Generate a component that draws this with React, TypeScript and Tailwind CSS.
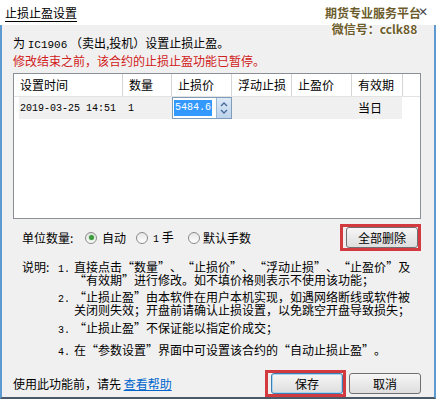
import React from "react";

const cjk = { fontFamily: '"Noto Sans CJK SC", "Noto Sans", sans-serif' };
const mono = { fontFamily: '"Liberation Mono", "Noto Sans CJK SC", monospace' };

function Q({ s }: { s: string }) {
  const parts = s.split(/([“”])/);
  return (
    <>
      {parts.map((p, i) =>
        p === "“" ? (
          <span key={i} className="inline-block w-[12px] text-right">“</span>
        ) : p === "”" ? (
          <span key={i} className="inline-block w-[12px] text-left">”</span>
        ) : (
          <React.Fragment key={i}>{p}</React.Fragment>
        )
      )}
    </>
  );
}

function Radio({ checked }: { checked?: boolean }) {
  return (
    <span className="w-[12px] h-[12px] rounded-full border border-[#8a8a8a] bg-gradient-to-b from-[#e6e6e6] to-[#ffffff] flex items-center justify-center shrink-0">
      {checked && <span className="w-[5px] h-[5px] rounded-full bg-[#3e9a3e] shadow-[0_0_2px_#7fcf7f]" />}
    </span>
  );
}

function WinButton({ children, def }: { children: React.ReactNode; def?: boolean }) {
  return (
    <div
      className={
        "w-[72px] h-[21px] rounded-[3px] border flex items-center justify-center text-[12px] text-black bg-gradient-to-b from-[#f6f6f6] to-[#dedede] " +
        (def ? "border-[#3c7fb1] shadow-[inset_0_0_0_1px_#a9d4f2]" : "border-[#707070]")
      }
    >
      {children}
    </div>
  );
}

export default function App() {
  const cols = [
    { t: "设置时间", w: 109 },
    { t: "数量", w: 49 },
    { t: "止损价", w: 60 },
    { t: "浮动止损", w: 60 },
    { t: "止盈价", w: 60 },
    { t: "有效期", w: 51 },
  ];
  return (
    <div className="w-[436px] h-[402px] bg-white relative overflow-hidden" style={cjk}>
      {/* title bar */}
      <div className="h-[25px] bg-white flex items-center pl-[5px] relative">
        <span className="text-[12px] text-black underline underline-offset-[3px] leading-none">止损止盈设置</span>
        <span className="absolute right-[8px] top-[5px] text-[12px] text-[#444] leading-none">✕</span>
      </div>
      {/* watermark */}
      <div
        className="absolute top-[5px] right-[15px] flex flex-col items-center text-[12px] font-bold text-[#6c5c2c] leading-[16px] z-10"
        style={{ textShadow: "0 0 2px #fff, 0 0 2px #fff, 0 0 3px #fff" }}
      >
        <span>期货专业服务平台</span>
        <span className="pl-[3px]">微信号：cclk88</span>
      </div>

      {/* body */}
      <div className="h-[374px] bg-[#f0f0f0] border-l-2 border-r-2 border-b-2 border-l-[#5d9ad0] border-r-[#5d9ad0] border-b-[#4a5868] pl-[11px] pr-[13px] pt-[9px] flex flex-col text-[12px] text-black">
        <div className="h-[18px] leading-[18px] whitespace-nowrap">
          为 <span style={mono} className="text-[11px]">IC1906</span> （卖出,投机）设置止损止盈。
        </div>
        <div className="h-[18px] leading-[18px] text-[#d02020] whitespace-nowrap">修改结束之前，该合约的止损止盈功能已暂停。</div>

        {/* table */}
        <div className="mt-[3px] h-[149px] border border-[#8a8f98] bg-white flex flex-col">
          <div className="h-[23px] flex border-b border-[#e3e3e3]">
            {cols.map((c) => (
              <div
                key={c.t}
                className="h-full border-r border-[#d5d5d5] pl-[6px] flex items-center text-[12px] whitespace-nowrap"
                style={{ width: c.w }}
              >
                {c.t}
              </div>
            ))}
          </div>
          <div className="h-[22px] flex">
            <div className="flex h-full bg-[#f0f0f0] ml-[5px] items-center">
              <div className="w-[104px] pl-[1px] text-[10px]" style={mono}>2019-03-25 14:51</div>
              <div className="w-[49px] pl-[5px] text-[10px]" style={mono}>1</div>
              <div className="w-[60px] h-full border border-[#7f9db9] bg-white flex items-center">
                <span className="ml-[1px] bg-[#3399ff] text-white text-[10px] leading-[16px] px-[1px]" style={mono}>
                  5484.6
                </span>
                <div className="ml-auto w-[15px] h-full bg-gradient-to-b from-[#dce9f7] to-[#bcd3ec] border-l border-[#9ab4d2] flex flex-col items-center justify-center gap-[2px]">
                  <svg width="8" height="5" viewBox="0 0 8 5">
                    <path d="M1 4 L4 1 L7 4" stroke="#4a6a9a" strokeWidth="1.4" fill="none" />
                  </svg>
                  <svg width="8" height="5" viewBox="0 0 8 5">
                    <path d="M1 1 L4 4 L7 1" stroke="#4a6a9a" strokeWidth="1.4" fill="none" />
                  </svg>
                </div>
              </div>
              <div className="w-[60px]" />
              <div className="w-[60px]" />
              <div className="w-[50px] pl-[6px] text-[12px]">当日</div>
            </div>
          </div>
        </div>

        {/* radio row */}
        <div className="mt-[5px] h-[27px] flex items-center pl-[9px]">
          <span className="w-[63px] whitespace-nowrap">单位数量:</span>
          <Radio checked />
          <span className="ml-[5px] w-[34px]">自动</span>
          <Radio />
          <span className="ml-[5px] w-[35px]">
            <span style={mono} className="text-[10px]">1</span> 手
          </span>
          <Radio />
          <span className="ml-[3px]">默认手数</span>
          <div className="ml-auto border-[3px] border-[#d23a40] pl-[3px] h-[27px] flex items-center">
            <WinButton>全部删除</WinButton>
          </div>
        </div>

        {/* notes */}
        <div className="mt-[9px] pl-[9px] flex flex-col leading-[13px] text-[12px]">
          <div className="flex items-baseline">
            <span className="w-[36px]">说明:</span>
            <span className="w-[16px] text-[10px]" style={mono}>1.</span>
            <div className="flex flex-col whitespace-nowrap">
              <span><Q s="直接点击“数量”、“止损价”、“浮动止损”、“止盈价”及" /></span>
              <span><Q s="“有效期”进行修改。如不填价格则表示不使用该功能；" /></span>
            </div>
          </div>
          <div className="flex items-baseline mt-[4px]">
            <span className="w-[36px]" />
            <span className="w-[16px] text-[10px]" style={mono}>2.</span>
            <div className="flex flex-col whitespace-nowrap">
              <span><Q s="“止损止盈”由本软件在用户本机实现，如遇网络断线或软件被" /></span>
              <span>关闭则失效；开盘前请确认止损设置，以免跳空开盘导致损失；</span>
            </div>
          </div>
          <div className="flex items-baseline mt-[5px]">
            <span className="w-[36px]" />
            <span className="w-[16px] text-[10px]" style={mono}>3.</span>
            <span className="whitespace-nowrap"><Q s="“止损止盈”不保证能以指定价成交；" /></span>
          </div>
          <div className="flex items-baseline mt-[6px]">
            <span className="w-[36px]" />
            <span className="w-[16px] text-[10px]" style={mono}>4.</span>
            <span className="whitespace-nowrap"><Q s="在“参数设置”界面中可设置该合约的“自动止损止盈”。" /></span>
          </div>
        </div>

        {/* bottom row */}
        <div className="mt-[11px] h-[27px] flex items-center">
          <span className="whitespace-nowrap">
            使用此功能前，请先 <span className="text-[#0066cc] underline">查看帮助</span>
          </span>
          <div className="ml-auto flex items-center gap-[3px]">
            <div className="border-[3px] border-[#d23a40] pl-[3px] h-[27px] flex items-center">
              <WinButton def>保存</WinButton>
            </div>
            <WinButton>取消</WinButton>
          </div>
        </div>
      </div>
    </div>
  );
}
